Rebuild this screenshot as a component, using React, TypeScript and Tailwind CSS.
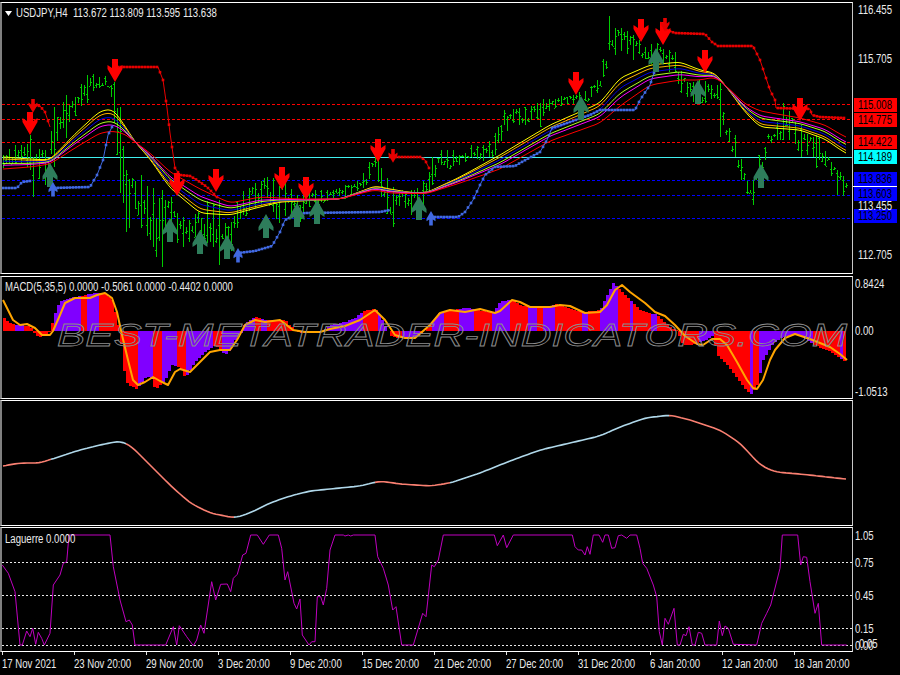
type Pt = [number, number];

const RED = "#ff0000";
const PURPLE = "#8000ff";

function rng(seed: number) {
  let s = seed;
  return () => {
    s = (s * 16807) % 2147483647;
    return s / 2147483647;
  };
}

// linear interpolation over a table sorted by first column
function lerp(table: number[][], x: number, col = 1) {
  if (x <= table[0][0]) return table[0][col];
  for (let i = 1; i < table.length; i++) {
    if (x <= table[i][0]) {
      const a = table[i - 1];
      const b = table[i];
      return a[col] + ((b[col] - a[col]) * (x - a[0])) / (b[0] - a[0] || 1);
    }
  }
  return table[table.length - 1][col];
}

const toPoints = (pts: number[][]) => pts.map((p) => `${p[0]},${p[1]}`).join(" ");

function smooth(values: number[], passes: number) {
  let ys = values;
  for (let pass = 0; pass < passes; pass++) {
    ys = ys.map((y, i) => (i === 0 || i === ys.length - 1 ? y : (ys[i - 1] + y + ys[i + 1]) / 3));
  }
  return ys;
}

// high / low envelope of the price bars
const envelope = [
  [3, 150, 170], [15, 145, 165], [30, 140, 170], [45, 150, 185], [60, 100, 130], [70, 105, 125], [85, 75, 110],
  [95, 72, 88], [110, 78, 88], [120, 120, 190], [127, 170, 232], [135, 175, 215], [143, 175, 235], [155, 190, 255],
  [170, 195, 230], [180, 215, 250], [190, 215, 245], [200, 210, 245], [210, 195, 250], [220, 220, 250],
  [230, 225, 255], [240, 190, 225], [250, 185, 210], [265, 175, 205], [280, 175, 225], [290, 190, 220],
  [300, 180, 225], [310, 190, 210], [330, 190, 200], [345, 185, 200], [360, 180, 190], [365, 165, 190],
  [375, 155, 170], [380, 160, 197], [390, 185, 222], [400, 190, 205], [410, 190, 215], [420, 185, 220],
  [430, 170, 190], [440, 150, 165], [450, 148, 170], [460, 155, 165], [470, 145, 160], [480, 145, 160],
  [490, 140, 165], [500, 125, 145], [510, 110, 125], [533, 105, 125], [550, 95, 110], [567, 95, 105],
  [587, 90, 105], [600, 75, 90], [607, 35, 75], [617, 25, 50], [633, 30, 60], [643, 45, 60], [653, 40, 70],
  [667, 50, 70], [677, 50, 80], [680, 65, 95], [687, 80, 100], [700, 75, 105], [717, 85, 100], [727, 125, 145],
  [735, 135, 157], [740, 155, 180], [747, 180, 195], [753, 180, 200], [760, 160, 185], [767, 135, 150],
  [773, 130, 140], [783, 100, 140], [793, 115, 140], [800, 125, 157], [810, 135, 160], [820, 135, 165],
  [827, 155, 170], [833, 165, 180], [837, 170, 195], [842, 172, 195], [845, 182, 197],
];

const spikes: Record<number, Pt> = {
  30: [135, 170], 33: [157, 197], 54: [107, 167], 66: [95, 138], 114: [82, 123], 120: [107, 193], 126: [170, 232],
  156: [218, 257], 162: [190, 267], 219: [200, 265], 378: [153, 182], 393: [187, 227], 432: [157, 185],
  498: [127, 143], 504: [110, 125], 540: [103, 127], 582: [100, 120], 609: [16, 50], 720: [83, 137], 735: [135, 157],
  753: [180, 205], 759: [155, 185], 801: [125, 157], 816: [135, 168], 837: [170, 195],
};

function makeBars() {
  const r = rng(4711);
  const bars: { x: number; hi: number; lo: number; open: number; close: number }[] = [];
  for (let x = 3, i = 0; x <= 846; x += 3, i++) {
    const top = lerp(envelope, x, 1);
    const bottom = lerp(envelope, x, 2);
    const span = bottom - top;
    // every other bar stays short, which leaves the gaps seen between the tall bars
    const h = i % 2 === 0 ? span * (0.65 + 0.35 * r()) : span * (0.15 + 0.25 * r());
    let hi = top + r() * (span - h);
    let lo = hi + h;
    if (spikes[x]) [hi, lo] = spikes[x];
    const open = Math.round(hi + r() * (lo - hi)) + 0.5;
    const close = Math.round(hi + r() * (lo - hi)) + 0.5;
    bars.push({ x, hi: Math.round(hi), lo: Math.round(lo), open, close });
  }
  return bars;
}

// x, centre, spread (positive: yellow on top)
const ribbon = [
  [3, 163, 6], [30, 163, 4], [50, 162, 2], [75, 141, 7], [100, 122, 11], [113, 120, 11], [125, 130, 4], [135, 142, 0],
  [150, 156, -3], [170, 180, -8], [200, 201, -12], [230, 209, -6], [260, 202, -5], [280, 200, -2], [300, 200, -1],
  [340, 199, 0], [362, 192, 1], [375, 188, 2], [390, 191, 2], [410, 193, 0.5], [427, 193, 0.5], [460, 180, 3],
  [500, 162, 7], [550, 133, 8], [600, 113, 10], [620, 92, 14], [650, 75, 10], [680, 71, 9], [700, 75, 5],
  [715, 75, 2], [725, 85, 0], [745, 108, -4], [760, 119, -8], [800, 124, -6], [825, 132, -7], [845, 145, -8],
];

const ribbonLines: [string, number][] = [
  ["#ffff00", -1], ["#ffb000", -0.68], ["#0000e0", -0.3], ["#b0ff20", 0.08], ["#ff00ff", 0.38], ["#ff0000", 1],
];

function ribbonPath(k: number) {
  const ys: number[] = [];
  for (let x = 3; x <= 846; x += 3) ys.push(lerp(ribbon, x, 1) + lerp(ribbon, x, 2) * k);
  return smooth(ys, 2).map((y, i) => [3 + i * 3, +y.toFixed(1)]);
}

const redStops: number[][][] = [
  [[33, 105], [40, 106], [45, 112], [50, 127]],
  [[115, 67], [158, 67], [163, 80], [167, 108], [170, 133], [175, 168], [180, 175], [190, 176], [197, 180], [207, 187], [217, 197]],
  [[390, 157], [420, 157], [425, 160], [429, 168]],
  [[667, 30], [675, 33], [705, 34], [712, 42], [718, 46], [753, 46], [760, 60], [765, 75], [770, 90], [775, 100], [776, 108], [810, 109], [812, 115], [820, 117], [845, 118]],
];

const blueStops: number[][][] = [
  [[3, 188], [17, 188], [22, 182], [30, 181]],
  [[52, 188], [90, 187], [97, 175], [103, 160], [108, 135], [113, 125]],
  [[238, 253], [255, 251], [272, 246], [280, 232], [285, 220], [295, 215], [305, 213], [380, 212], [390, 210]],
  [[432, 217], [458, 217], [465, 212], [473, 200], [480, 185], [485, 175], [495, 167], [515, 166], [520, 163], [540, 152], [547, 140], [552, 128], [570, 122], [590, 115], [600, 110], [635, 110], [640, 100], [650, 85], [655, 70], [660, 60]],
];

const redArrows: number[][] = [
  [30, 112], [115, 59], [177, 173], [216, 169], [282, 167], [306, 177], [378, 139], [576, 72], [641, 19], [663, 22], [705, 50], [800, 98],
];
const smallRedArrows: number[][] = [[33, 99], [393, 149], [665, 18]];
const greenArrows: number[][] = [
  [50, 163], [170, 218], [200, 230], [227, 235], [266, 214], [297, 203], [317, 200], [419, 196], [581, 96], [656, 48], [698, 80], [761, 164],
];
const blueArrows: number[][] = [[53, 182], [238, 248], [431, 211]];

const downArrow = "-3,0 3,0 3,9 7.5,6 7.5,10 0,23 -7.5,10 -7.5,6 -3,9";
const upArrow = "-3,24 3,24 3,14 7.5,17 7.5,13 0,0 -7.5,13 -7.5,17 -3,14";

const histogram = [
  [3, 316], [6, 321], [15, 325], [30, 326], [33, 331], [35, 335], [40, 337], [45, 335], [50, 331], [53, 319], [58, 305],
  [62, 300], [70, 298], [80, 296], [95, 293], [105, 293], [112, 300], [117, 320], [120, 335], [125, 380], [128, 385],
  [137, 389], [145, 378], [150, 376], [155, 390], [165, 380], [172, 365], [180, 368], [185, 378], [195, 362], [205, 352],
  [215, 345], [225, 355], [230, 350], [235, 340], [240, 335], [245, 323], [255, 317], [265, 320], [285, 320], [290, 326],
  [300, 333], [310, 333], [322, 331], [330, 325], [345, 322], [355, 318], [362, 312], [375, 308], [382, 320], [390, 335],
  [395, 338], [410, 338], [420, 335], [430, 325], [440, 312], [450, 310], [467, 308], [487, 312], [493, 312], [500, 302],
  [510, 299], [520, 305], [530, 307], [543, 307], [557, 304], [573, 310], [583, 312], [600, 310], [607, 295], [613, 283],
  [620, 290], [627, 297], [640, 310], [657, 315], [667, 325], [677, 331], [683, 345], [690, 345], [707, 340], [713, 335],
  [717, 355], [727, 365], [737, 378], [747, 392], [752, 394], [757, 385], [763, 360], [772, 345], [780, 338], [790, 335],
  [800, 335], [813, 345], [827, 350], [840, 358], [847, 363],
];

// [end x, colour] runs of the histogram
const histRuns: [number, string][] = [
  [14, RED], [22, PURPLE], [52, RED], [79, PURPLE], [85, RED], [97, PURPLE], [138, RED], [151, PURPLE], [160, RED],
  [175, PURPLE], [184, RED], [213, PURPLE], [220, RED], [253, PURPLE], [260, RED], [267, PURPLE], [320, RED],
  [363, PURPLE], [377, RED], [387, PURPLE], [400, RED], [420, PURPLE], [430, RED], [442, PURPLE], [459, RED],
  [472, PURPLE], [490, RED], [510, PURPLE], [528, RED], [535, PURPLE], [543, RED], [555, PURPLE], [580, RED],
  [587, PURPLE], [600, RED], [616, PURPLE], [630, RED], [632, PURPLE], [650, RED], [657, PURPLE], [697, RED],
  [713, PURPLE], [750, RED], [752, PURPLE], [757, RED], [813, PURPLE], [840, RED], [843, PURPLE], [850, RED],
];

const signal = [
  [3, 300], [8, 310], [13, 320], [20, 325], [27, 324], [35, 328], [42, 335], [50, 335], [53, 331], [60, 315], [65, 303],
  [75, 298], [90, 298], [97, 295], [105, 293], [112, 298], [117, 312], [122, 335], [128, 360], [133, 380], [138, 385],
  [145, 382], [153, 377], [160, 381], [168, 385], [175, 372], [180, 369], [190, 372], [200, 362], [210, 352], [220, 350],
  [230, 350], [237, 340], [245, 325], [255, 320], [265, 322], [280, 320], [293, 330], [305, 332], [320, 332], [330, 329],
  [345, 326], [360, 320], [375, 310], [385, 320], [395, 335], [405, 338], [415, 338], [430, 325], [440, 313], [450, 310],
  [465, 312], [480, 309], [495, 313], [500, 311], [512, 300], [520, 302], [530, 307], [550, 307], [560, 305], [570, 306],
  [585, 313], [600, 312], [607, 305], [615, 290], [622, 285], [630, 292], [645, 303], [655, 312], [665, 316], [675, 325],
  [685, 336], [697, 344], [703, 345], [712, 339], [720, 339], [727, 345], [737, 362], [747, 380], [753, 388], [757, 389],
  [763, 380], [770, 360], [775, 350], [785, 338], [795, 334], [810, 339], [830, 347], [840, 354], [847, 360],
];

const slowLine = [
  [3, 466], [20, 463], [40, 463], [55, 458], [80, 450], [100, 445], [120, 441], [130, 445], [150, 465], [170, 485],
  [190, 503], [210, 513], [235, 518], [250, 513], [270, 503], [290, 496], [310, 491], [340, 488], [360, 486], [380, 481],
  [400, 484], [430, 486], [450, 483], [480, 473], [510, 461], [540, 450], [570, 443], [600, 436], [620, 427], [645, 418],
  [670, 415], [690, 420], [720, 430], [740, 443], [760, 465], [775, 472], [800, 474], [845, 479],
];
const slowColors: [number, number, string][] = [
  [3, 51, "#fa8072"], [51, 126, "#b0d8ea"], [126, 234, "#fa8072"], [234, 375, "#b0d8ea"], [375, 450, "#fa8072"],
  [450, 669, "#b0d8ea"], [669, 846, "#fa8072"],
];

// traced from the picture at 3x, [x * 3, (y - 525) * 3]
const laguerre3x = [
  [7, 120], [25, 145], [45, 200], [60, 360], [67, 360], [80, 318], [90, 335], [98, 310], [107, 358], [115, 322], [125, 340],
  [133, 360], [150, 325], [160, 180], [180, 150], [190, 115], [200, 110], [207, 30], [330, 30], [340, 125], [360, 225],
  [378, 290], [388, 285], [397, 300], [405, 360], [497, 360], [520, 305], [530, 360], [538, 302], [560, 335], [580, 362],
  [590, 345], [602, 300], [612, 325], [635, 170], [647, 225], [662, 178], [682, 177], [692, 200], [700, 160], [712, 148],
  [728, 90], [738, 85], [752, 30], [772, 30], [790, 58], [808, 30], [835, 30], [845, 70], [855, 165], [863, 140], [882, 235],
  [890, 252], [900, 222], [907, 330], [927, 360], [935, 350], [945, 350], [952, 215], [962, 215], [970, 240], [980, 190],
  [990, 75], [1005, 30], [1030, 30], [1035, 33], [1045, 30], [1052, 33], [1060, 30], [1125, 30], [1133, 95], [1150, 130],
  [1165, 180], [1178, 255], [1188, 245], [1205, 360], [1240, 360], [1268, 265], [1278, 275], [1295, 120], [1303, 125],
  [1315, 105], [1330, 30], [1483, 30], [1492, 62], [1510, 30], [1520, 68], [1540, 30], [1717, 30], [1725, 65], [1735, 75],
  [1745, 75], [1755, 90], [1762, 65], [1770, 88], [1780, 30], [1797, 30], [1808, 52], [1815, 30], [1825, 30], [1835, 70],
  [1845, 68], [1855, 32], [1865, 30], [1880, 40], [1890, 30], [1910, 30], [1920, 70], [1928, 115], [1940, 130], [1960, 180],
  [1970, 215], [1978, 320], [1987, 360], [1995, 280], [2005, 298], [2022, 250], [2032, 360], [2040, 360], [2050, 328],
  [2058, 332], [2067, 305], [2077, 360], [2085, 360], [2095, 322], [2105, 325], [2115, 360], [2150, 360], [2158, 288],
  [2167, 332], [2175, 303], [2185, 310], [2200, 358], [2270, 360], [2285, 295], [2300, 265], [2312, 240], [2340, 130],
  [2347, 30], [2393, 30], [2402, 120], [2410, 95], [2420, 97], [2430, 170], [2445, 265], [2455, 235], [2465, 360], [2540, 360],
];
const laguerre = laguerre3x.map(([x, y]) => [+(x / 3).toFixed(1), +(525 + y / 3).toFixed(1)]);

const dates = [
  "17 Nov 2021", "23 Nov 20:00", "29 Nov 20:00", "3 Dec 20:00", "9 Dec 20:00", "15 Dec 20:00",
  "21 Dec 20:00", "27 Dec 20:00", "31 Dec 20:00", "6 Jan 20:00", "12 Jan 20:00", "18 Jan 20:00",
];

function Dotted({ stops, color, size }: { stops: number[][][]; color: string; size: number }) {
  return (
    <g>
      {stops.map((seg, i) => {
        const dots: number[][] = [];
        for (let x = seg[0][0]; x <= seg[seg.length - 1][0]; x += 3) dots.push([x, lerp(seg, x)]);
        return (
          <g key={i}>
            <polyline points={toPoints(seg)} fill="none" stroke={color} strokeWidth={1} />
            {dots.map(([x, y]) => (
              <rect key={x} x={x - size / 2} y={y - size / 2} width={size} height={size} fill={color} />
            ))}
          </g>
        );
      })}
    </g>
  );
}

function PriceChart() {
  const bars = makeBars();
  return (
    <svg className="block" width="850" height="270" viewBox="2 3 850 270">
      <g stroke="#ff0000" strokeDasharray="3 2">
        <line x1="2" x2="852" y1="104.5" y2="104.5" />
        <line x1="2" x2="852" y1="119.5" y2="119.5" />
        <line x1="2" x2="852" y1="142.5" y2="142.5" />
      </g>
      <g stroke="#0000ff" strokeDasharray="3 2">
        <line x1="2" x2="852" y1="180.5" y2="180.5" />
        <line x1="2" x2="852" y1="195.5" y2="195.5" />
        <line x1="2" x2="852" y1="218.5" y2="218.5" />
      </g>
      <line x1="2" x2="852" y1="157.5" y2="157.5" stroke="#40f0f0" />
      <g stroke="#00cc00" shapeRendering="crispEdges">
        {bars.map((b) => (
          <g key={b.x}>
            <line x1={b.x + 0.5} x2={b.x + 0.5} y1={b.hi} y2={b.lo} />
            <line x1={b.x - 1} x2={b.x} y1={b.open} y2={b.open} />
            <line x1={b.x + 1} x2={b.x + 2} y1={b.close} y2={b.close} />
          </g>
        ))}
      </g>
      <g fill="none" strokeWidth="1">
        {ribbonLines.map(([color, k]) => (
          <polyline key={color} points={toPoints(ribbonPath(k))} stroke={color} />
        ))}
      </g>
      <Dotted stops={redStops} color="#e80000" size={2.6} />
      <Dotted stops={blueStops} color="#4169e1" size={2.6} />
      {greenArrows.map(([x, y]) => (
        <polygon key={x} points={upArrow} transform={`translate(${x} ${y})`} fill="#2e7d5b" />
      ))}
      {blueArrows.map(([x, y]) => (
        <polygon key={x} points={upArrow} transform={`translate(${x} ${y}) scale(0.6)`} fill="#4169e1" />
      ))}
      {redArrows.map(([x, y]) => (
        <polygon key={x} points={downArrow} transform={`translate(${x} ${y})`} fill="#ff0000" />
      ))}
      {smallRedArrows.map(([x, y]) => (
        <polygon key={x} points={downArrow} transform={`translate(${x} ${y}) scale(0.6)`} fill="#e80000" />
      ))}
    </svg>
  );
}

function MacdChart() {
  const cols: { x: number; y: number; color: string }[] = [];
  for (let x = 3; x <= 845; x += 3) {
    const run = histRuns.find((r) => x < r[0]);
    cols.push({ x, y: lerp(histogram, x + 1), color: run ? run[1] : RED });
  }
  return (
    <svg className="block" width="850" height="121" viewBox="2 277 850 121">
      {cols.map((c) => (
        <rect
          key={c.x}
          x={c.x}
          width="3"
          y={Math.min(c.y, 331)}
          height={Math.abs(c.y - 331)}
          fill={c.color}
          shapeRendering="crispEdges"
        />
      ))}
      <polyline points={toPoints(signal)} fill="none" stroke="#ffa500" strokeWidth="2" strokeLinejoin="round" />
      <text
        x="57"
        y="346"
        textLength="790"
        lengthAdjust="spacingAndGlyphs"
        fontFamily="'Liberation Sans', sans-serif"
        fontStyle="italic"
        fontSize="32"
        fill="none"
        stroke="#8c8c8c"
        strokeWidth="0.8"
      >
        BEST-METATRADER-INDICATORS.COM
      </text>
    </svg>
  );
}

function SlowChart() {
  const all: number[] = [];
  for (let x = 3; x <= 846; x += 3) all.push(lerp(slowLine, x));
  const ys = smooth(all, 3);
  return (
    <svg className="block" width="850" height="124" viewBox="2 401 850 124">
      {slowColors.map(([from, to, color]) => {
        const pts: number[][] = [];
        for (let x = from; x <= to; x += 3) pts.push([x, +ys[(x - 3) / 3].toFixed(1)]);
        return <polyline key={from} points={toPoints(pts)} fill="none" stroke={color} strokeWidth="1.6" />;
      })}
    </svg>
  );
}

function LaguerreChart() {
  return (
    <svg className="block" width="850" height="123" viewBox="2 528 850 123">
      <g stroke="#e8e8e8" strokeDasharray="2 2">
        <line x1="2" x2="852" y1="562.5" y2="562.5" />
        <line x1="2" x2="852" y1="595.5" y2="595.5" />
        <line x1="2" x2="852" y1="628.5" y2="628.5" />
        <line x1="2" x2="852" y1="645.5" y2="645.5" />
      </g>
      <polyline points={toPoints(laguerre)} fill="none" stroke="#c000c0" strokeWidth="1" />
    </svg>
  );
}

// the chart font is narrower than anything installed, so Liberation Sans gets squeezed
function Narrow({ children }: { children: string }) {
  return <span className="block w-max origin-left scale-x-[0.8] whitespace-pre leading-[14px]">{children}</span>;
}

function Tag({ children, className }: { children: string; className: string }) {
  return (
    <div className={`w-[43px] h-[14px] ml-[1px] pl-[4px] text-black ${className}`}>
      <Narrow>{children}</Narrow>
    </div>
  );
}

const paneClass =
  "relative w-[853px] border-y border-white border-l-2 border-l-[#808080] border-r border-r-[#c8c8c8]";

export default function App() {
  return (
    <div className="w-[900px] h-[675px] bg-black overflow-hidden pt-[2px] flex flex-col text-[12px] text-[#ececec] font-['Liberation_Sans',sans-serif]">
      <div className="flex h-[272px] mb-[2px]">
        <div className={paneClass}>
          <PriceChart />
          <div className="absolute left-[3px] top-[3px] flex items-center gap-[4px]">
            <svg width="7" height="5" viewBox="0 0 7 5" className="block">
              <polygon points="0,0 7,0 3.5,5" fill="#ffffff" />
            </svg>
            <Narrow>USDJPY,H4  113.672 113.809 113.595 113.638</Narrow>
          </div>
        </div>
        <div className="grid flex-1">
          <div className="[grid-area:1/1] flex flex-col pt-[1px] pl-[5px]">
            <div className="h-[14px]"><Narrow>116.455</Narrow></div>
            <div className="h-[14px] mt-[35px]"><Narrow>115.705</Narrow></div>
            <div className="h-[14px] mt-[133px]"><Narrow>113.455</Narrow></div>
            <div className="h-[14px] mt-[35px]"><Narrow>112.705</Narrow></div>
          </div>
          <div className="[grid-area:1/1] flex flex-col gap-[8px] pt-[96px]">
            <div className="flex flex-col gap-px">
              <Tag className="bg-[#ff0000]">115.008</Tag>
              <Tag className="bg-[#ff0000]">114.775</Tag>
            </div>
            <div className="flex flex-col gap-px">
              <Tag className="bg-[#ff0000]">114.422</Tag>
              <Tag className="bg-[#00ffff]">114.189</Tag>
            </div>
            <div className="flex flex-col">
              <Tag className="bg-[#0000ff]">113.836</Tag>
              <div className="h-px w-[44px] bg-white" />
              <Tag className="bg-[#0000ff]">113.603</Tag>
            </div>
            <Tag className="bg-[#0000ff]">113.250</Tag>
          </div>
        </div>
      </div>

      <div className="flex h-[123px] mb-[1px]">
        <div className={paneClass}>
          <MacdChart />
          <div className="absolute left-[3px] top-[3px]">
            <Narrow>MACD(5,35,5) 0.0000 -0.5061 0.0000 -0.4402 0.0000</Narrow>
          </div>
        </div>
        <div className="flex flex-col flex-1 pl-[2px] pt-[1px]">
          <div className="h-[14px]"><Narrow>0.8424</Narrow></div>
          <div className="h-[14px] mt-[33px]"><Narrow>0.00</Narrow></div>
          <div className="h-[14px] mt-[47px]"><Narrow>-1.0513</Narrow></div>
        </div>
      </div>

      <div className="flex h-[126px] mb-[1px]">
        <div className={paneClass}>
          <SlowChart />
        </div>
      </div>

      <div className="flex h-[125px]">
        <div className={paneClass}>
          <LaguerreChart />
          <div className="absolute left-[3px] top-[4px]">
            <Narrow>Laguerre 0.0000</Narrow>
          </div>
        </div>
        <div className="flex flex-col flex-1 pl-[2px] pt-[2px]">
          <div className="h-[14px]"><Narrow>1.05</Narrow></div>
          <div className="h-[14px] mt-[13px]"><Narrow>0.75</Narrow></div>
          <div className="h-[14px] mt-[19px]"><Narrow>0.45</Narrow></div>
          <div className="h-[14px] mt-[19px]"><Narrow>0.15</Narrow></div>
          <div className="relative h-[14px] mt-[3px]">
            <Narrow>0.00</Narrow>
            <div className="absolute left-[4px] -top-[2px]">
              <Narrow>0.05</Narrow>
            </div>
          </div>
        </div>
      </div>

      <div className="flex pl-[2px] h-[23px]">
        {dates.map((d) => (
          <div key={d} className="w-[72px] shrink-0">
            <div className="h-[3px] w-px bg-[#e0e0e0]" />
            <div className="pt-[2px]">
              <Narrow>{d}</Narrow>
            </div>
          </div>
        ))}
      </div>
    </div>
  );
}
